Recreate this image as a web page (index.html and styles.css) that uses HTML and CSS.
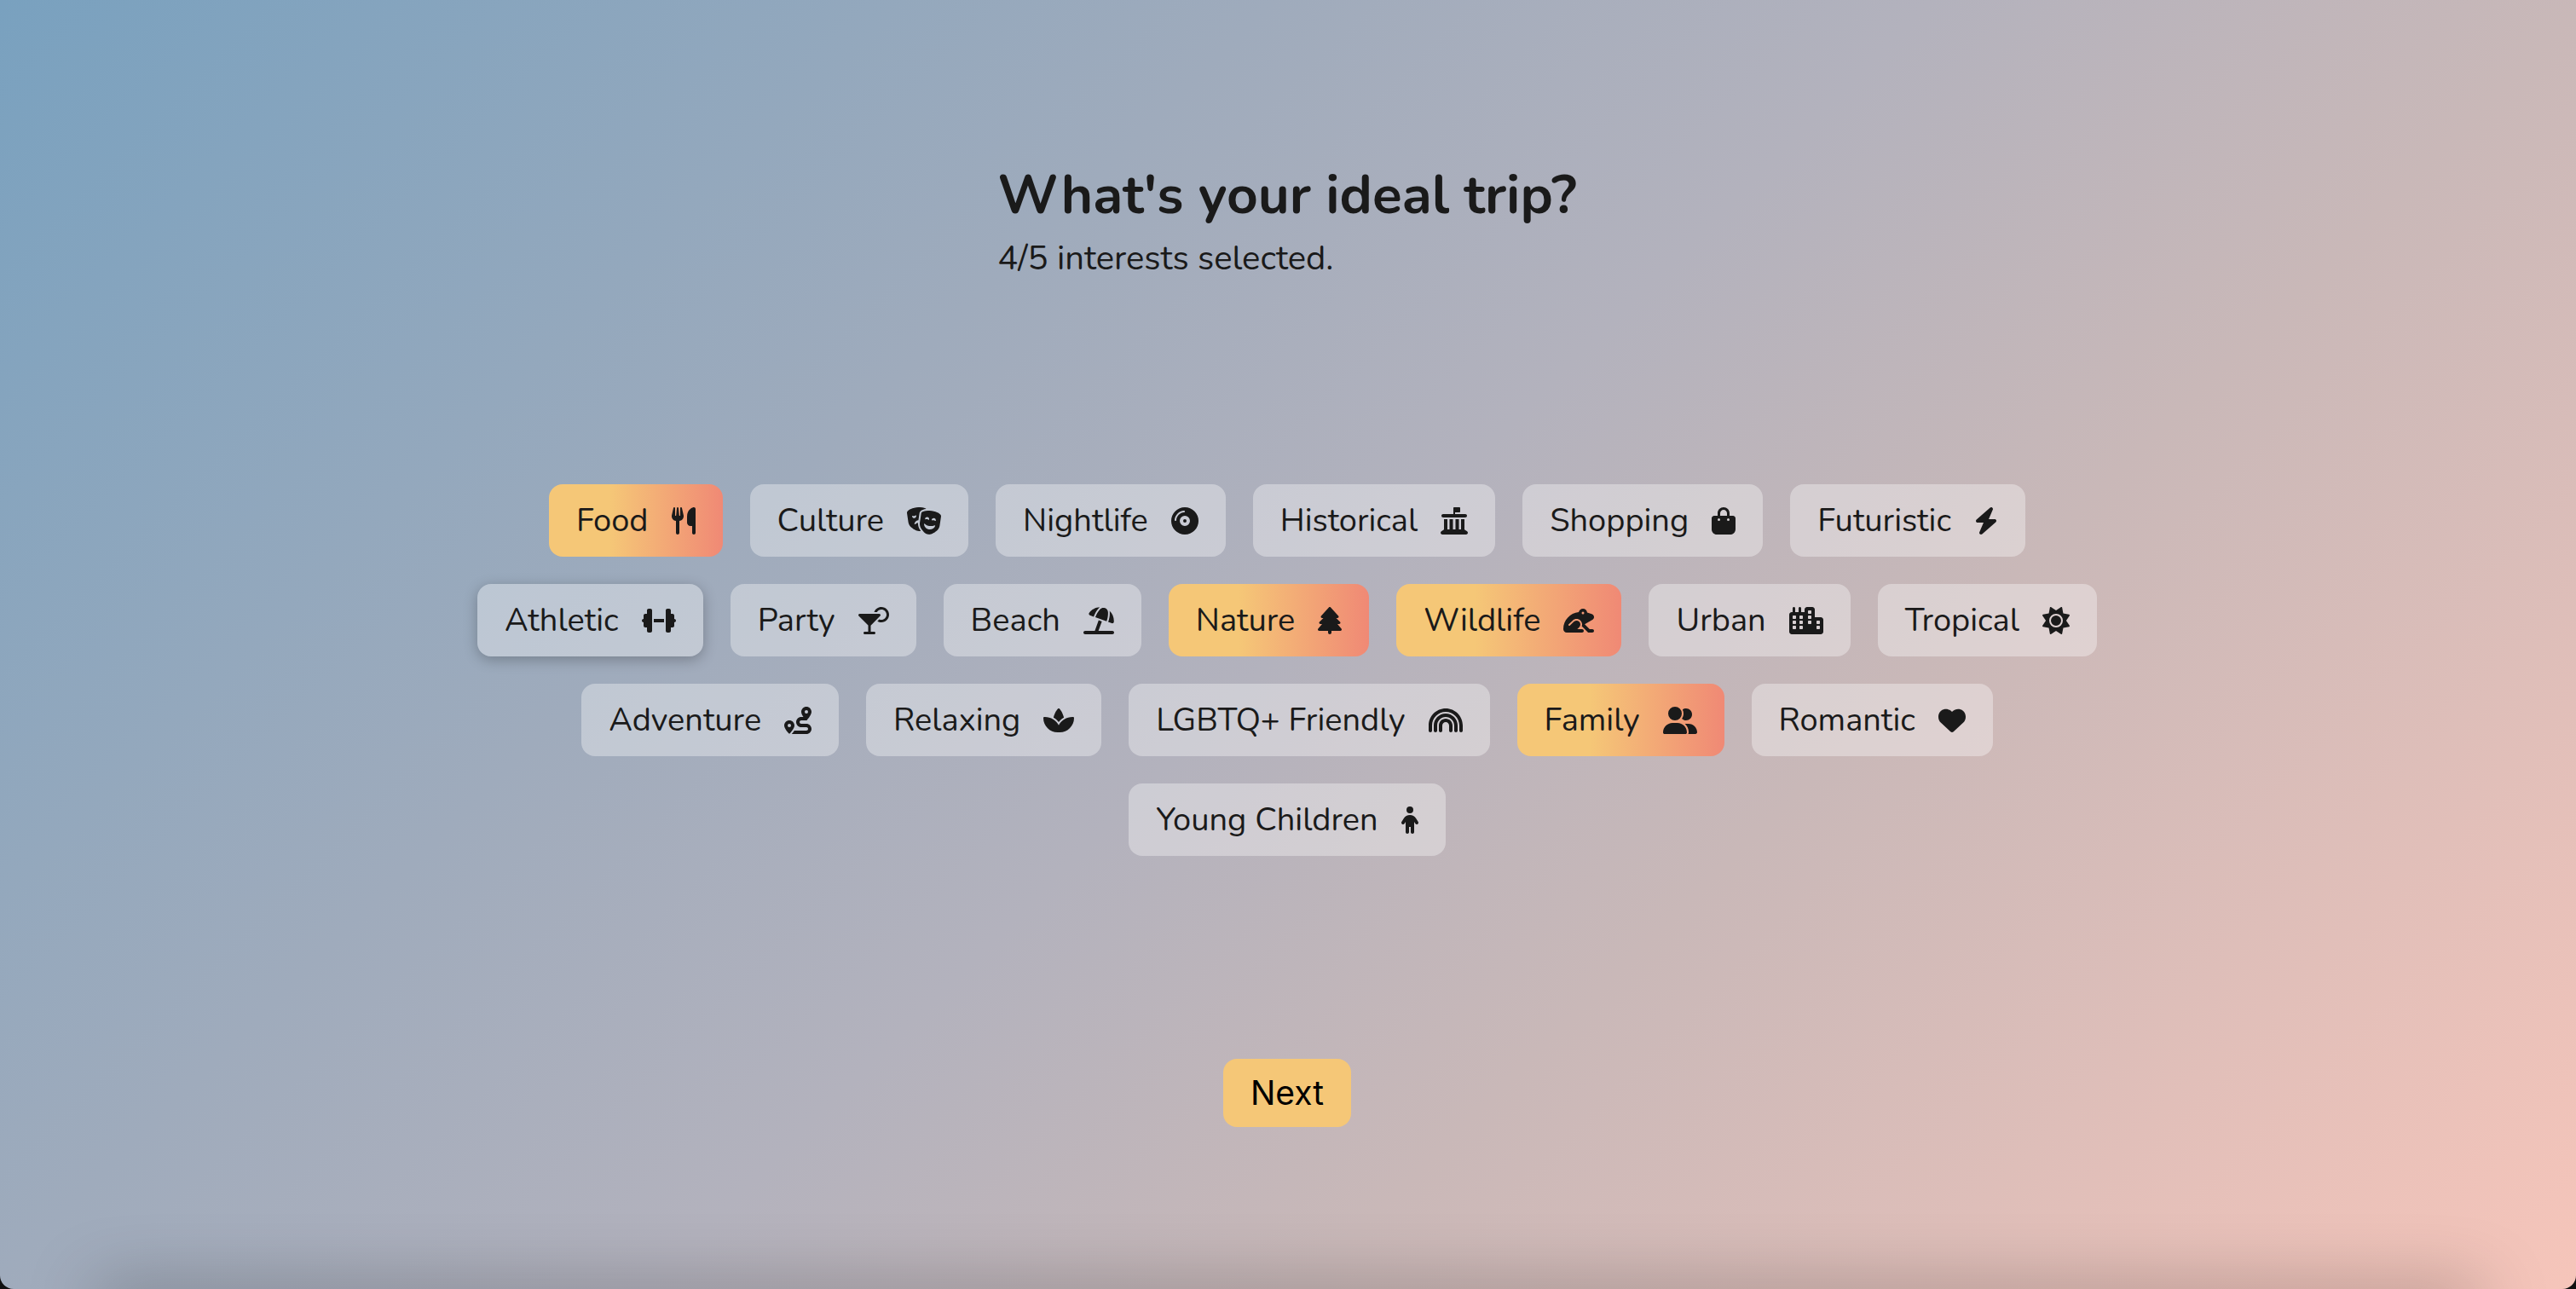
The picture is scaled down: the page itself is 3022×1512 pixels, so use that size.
FILE: index.html
```html
<!DOCTYPE html>
<html lang="en">
<head>
    <meta charset="UTF-8">
    <meta name="viewport" content="width=device-width, initial-scale=1.0">
    <title>What's your ideal trip?</title>
    <link rel="stylesheet" href="styles.css">
</head>
<body>
    <main class="page">
        <header class="intro">
            <h1>What's your ideal trip?</h1>
            <p id="counter">4/5 interests selected.</p>
        </header>

        <div class="interests">
            <button type="button" class="interest selected" aria-pressed="true">
                <span>Food</span>
                <svg viewBox="0 0 448 512" aria-hidden="true"><path d="M416 0C400 0 288 32 288 176V288c0 35.3 28.7 64 64 64h32V480c0 17.7 14.3 32 32 32s32-14.3 32-32V352 240 32c0-17.7-14.3-32-32-32zM64 16C64 7.8 57.9 1 49.7 .1S34.2 4.6 32.4 12.5L2.1 148.8C.7 155.1 0 161.5 0 167.9c0 45.9 35.1 83.6 80 87.7V480c0 17.7 14.3 32 32 32s32-14.3 32-32V255.6c44.9-4.1 80-41.8 80-87.7c0-6.4-.7-12.8-2.1-19.1L191.6 12.5c-1.8-8-9.3-13.3-17.4-12.4S160 7.8 160 16V150.2c0 5.4-4.4 9.8-9.8 9.8c-5.1 0-9.3-3.9-9.8-9L127.9 14.6C127.2 6.3 120.3 0 112 0s-15.2 6.3-15.9 14.6L83.7 151c-.5 5.1-4.7 9-9.8 9c-5.4 0-9.8-4.4-9.8-9.8V16z"/></svg>
            </button>
            <button type="button" class="interest" aria-pressed="false">
                <span>Culture</span>
                <svg viewBox="0 0 640 512" aria-hidden="true"><path d="M74.600 373.200c41.700 36.100 108 82.500 166.100 73.700c6.100-.9 12.100-2.500 18-4.500c-9.200-12.300-17.300-24.400-24.200-35.400c-21.900-35-28.800-75.200-25.900-113.600c-20.600 4.100-39.200 13-54.700 25.400c-6.500 5.200-16.300 1.300-14.800-7c6.400-33.500 33-60.900 68.200-66.300c2.600-.4 5.300-.7 7.900-.8l19.400-131.300c2-13.800 8-32.700 25-45.900C278.200 53.200 310.500 37 363.200 32.200c-.8-.7-1.600-1.400-2.400-2.100C340.600 14.500 288.400-11.500 175.700 5.600S20.500 63 5.700 83.900C0 91.900-.8 102 .6 111.800L24.800 276.100c5.500 37.300 21.500 72.600 49.800 97.200zm87.700-219.600c4.400-3.100 10.800-2 11.800 3.300c.1 .5 .2 1.100 .3 1.600c3.200 21.800-11.600 42-33.100 45.300s-41.500-11.800-44.700-33.500c-.1-.5-.1-1.100-.2-1.600c-.6-5.400 5.200-8.400 10.300-6.700c9 3 18.800 3.900 28.700 2.400s19.100-5.300 26.800-10.800zM261.600 390c29.400 46.900 79.500 110.900 137.600 119.700s124.500-37.500 166.100-73.700c28.300-24.500 44.300-59.800 49.800-97.200l24.200-164.300c1.400-9.800 .6-19.900-5.100-27.900c-14.800-20.900-57.300-61.200-170-78.300S299.400 77.200 279.200 92.800c-7.800 6-11.500 15.400-12.900 25.200L242.100 282.300c-5.500 37.300-.4 75.800 19.600 107.700zM404.500 235.300c-7.700-5.500-16.800-9.300-26.800-10.800s-19.800-.6-28.700 2.400c-5.100 1.700-10.900-1.300-10.300-6.700c.1-.5 .1-1.100 .2-1.600c3.200-21.800 23.200-36.800 44.700-33.500s36.300 23.500 33.100 45.300c-.1 .5-.2 1.100-.3 1.600c-1 5.300-7.400 6.400-11.800 3.300zm136.200 15.500c-1 5.300-7.400 6.400-11.800 3.300c-7.700-5.500-16.800-9.300-26.800-10.800s-19.800-.6-28.700 2.400c-5.100 1.700-10.900-1.300-10.300-6.700c.1-.5 .1-1.100 .2-1.600c3.200-21.800 23.200-36.800 44.700-33.500s36.300 23.500 33.100 45.300c-.1 .5-.2 1.100-.3 1.600zM530 350.200c-19.600 44.700-66.800 72.500-116.800 64.900s-87.100-48.200-93-96.700c-1-8.300 8.900-12.100 15.200-6.700c23.900 20.800 53.600 35.300 87 40.300s66.100 .1 94.900-12.800c7.600-3.400 16 3.200 12.600 10.900z"/></svg>
            </button>
            <button type="button" class="interest" aria-pressed="false">
                <span>Nightlife</span>
                <svg viewBox="0 0 512 512" aria-hidden="true"><path fill-rule="evenodd" d="M0 256a256 256 0 1 1 512 0A256 256 0 1 1 0 256zm256 32a32 32 0 1 1 0-64 32 32 0 1 1 0 64zm-96-32a96 96 0 1 0 192 0 96 96 0 1 0-192 0zM96 240c0-35 17.500-71.100 45.200-98.800S205 96 240 96c8.800 0 16-7.200 16-16s-7.200-16-16-16c-45.400 0-89.200 22.300-121.500 54.500S64 194.600 64 240c0 8.800 7.200 16 16 16s16-7.200 16-16z"/></svg>
            </button>
            <button type="button" class="interest" aria-pressed="false">
                <span>Historical</span>
                <svg viewBox="0 0 512 512" aria-hidden="true"><path d="M272 0h80c8.800 0 16 7.200 16 16V80c0 8.800-7.200 16-16 16H272v32H464c17.700 0 32 14.300 32 32s-14.300 32-32 32H48c-17.700 0-32-14.300-32-32s14.300-32 32-32H240V16c0-8.800 7.200-16 16-16h16zM64 224h64V416h40V224h64V416h48V224h64V416h40V224h64V420.300c.6 .3 1.200 .7 1.700 1.100l48 32c11.700 7.800 17 22.400 12.900 35.900S494.100 512 480 512H32c-14.100 0-26.500-9.200-30.600-22.700s1.100-28.100 12.900-35.900l48-32c.6-.4 1.200-.7 1.800-1.100V224z"/></svg>
            </button>
            <button type="button" class="interest" aria-pressed="false">
                <span>Shopping</span>
                <svg viewBox="0 0 448 512" aria-hidden="true"><path d="M160 112c0-35.300 28.700-64 64-64s64 28.700 64 64v48H160V112zm-48 48H48c-26.500 0-48 21.500-48 48V416c0 53 43 96 96 96H352c53 0 96-43 96-96V208c0-26.500-21.500-48-48-48H336V112C336 50.100 285.900 0 224 0S112 50.100 112 112v48zm24 48a24 24 0 1 1 0 48 24 24 0 1 1 0-48zm152 24a24 24 0 1 1 48 0 24 24 0 1 1-48 0z" fill-rule="evenodd"/></svg>
            </button>
            <button type="button" class="interest" aria-pressed="false">
                <span>Futuristic</span>
                <svg viewBox="0 0 448 512" aria-hidden="true"><path d="M349.400 44.600c5.900-13.700 1.500-29.700-10.600-38.500s-28.600-8-39.900 1.800l-256 224c-10 8.800-13.600 22.900-8.900 35.300S50.700 288 64 288H175.500L98.600 467.400c-5.900 13.700-1.500 29.700 10.600 38.500s28.600 8 39.900-1.800l256-224c10-8.800 13.600-22.900 8.900-35.300s-16.600-20.700-30-20.700H272.500L349.400 44.600z"/></svg>
            </button>
            <button type="button" class="interest raised" aria-pressed="false">
                <span>Athletic</span>
                <svg viewBox="0 0 640 512" aria-hidden="true"><path d="M96 64c0-17.700 14.300-32 32-32h32c17.700 0 32 14.300 32 32V224v64V448c0 17.700-14.300 32-32 32H128c-17.700 0-32-14.300-32-32V384H64c-17.700 0-32-14.300-32-32V288c-17.700 0-32-14.300-32-32s14.300-32 32-32V160c0-17.700 14.300-32 32-32H96V64zm448 0v64h32c17.700 0 32 14.300 32 32v64c17.700 0 32 14.300 32 32s-14.300 32-32 32v64c0 17.700-14.300 32-32 32H544v64c0 17.700-14.300 32-32 32H480c-17.700 0-32-14.300-32-32V288 224 64c0-17.700 14.300-32 32-32h32c17.700 0 32 14.300 32 32zM416 224v64H224V224H416z"/></svg>
            </button>
            <button type="button" class="interest" aria-pressed="false">
                <span>Party</span>
                <svg viewBox="0 0 576 512" aria-hidden="true"><path d="M432 240c53 0 96-43 96-96s-43-96-96-96c-35.500 0-66.600 19.300-83.200 48H296.200C316 40.100 369.300 0 432 0c79.500 0 144 64.500 144 144s-64.500 144-144 144c-27.700 0-53.500-7.800-75.500-21.300l35.400-35.400c12.200 5.600 25.800 8.700 40.100 8.700zM1.800 142.800C5.500 133.800 14.300 128 24 128H392c9.700 0 18.500 5.800 22.200 14.800s1.700 19.300-5.200 26.200l-177 177V464h64c13.300 0 24 10.700 24 24s-10.700 24-24 24H208 120c-13.300 0-24-10.700-24-24s10.700-24 24-24h64V345.900L7 169c-6.900-6.900-8.900-17.200-5.200-26.200z"/></svg>
            </button>
            <button type="button" class="interest" aria-pressed="false">
                <span>Beach</span>
                <svg viewBox="0 0 576 512" aria-hidden="true"><path d="M346.300 271.800l-60.100-21.900L214 448H32c-17.700 0-32 14.300-32 32s14.300 32 32 32H544c17.700 0 32-14.300 32-32s-14.300-32-32-32H282.100l64.100-176.200zm121.100-.2l-3.300 9.100 67.700 24.600c18.100 6.600 38-4.200 39.600-23.400c6.500-78.500-23.900-155.500-80.800-208.500c2 8 3.200 16.300 3.400 24.800l.2 6c1.800 57-7.300 113.800-26.800 167.400zM462 99.100c-1.100-34.400-22.500-64.800-54.400-77.400c-.9-.4-1.900-.7-2.800-1.100c-33-11.700-69.800-2.400-93.100 23.800l-4 4.500C272.400 88.300 245 134.200 226.800 184l-3.300 9.100L434 269.700l3.300-9.100c18.100-49.800 26.600-102.500 24.900-155.500l-.2-6zM107.200 112.900c-11.100 15.700-2.800 36.800 15.300 43.400l71 25.800 3.300-9.100c19.500-53.600 49.100-103 87.100-145.500l4-4.500c6.200-6.900 13.100-13 20.500-18.200c-79.600 2.500-154.700 42.200-201.200 108z"/></svg>
            </button>
            <button type="button" class="interest selected" aria-pressed="true">
                <span>Nature</span>
                <svg viewBox="0 0 448 512" aria-hidden="true"><path d="M210.600 5.900L62 169.400c-3.900 4.200-6 9.800-6 15.500C56 197.700 66.300 208 79.100 208H104L30.600 281.400c-4.200 4.200-6.600 10-6.600 16C24 309.900 34.100 320 46.600 320H80L5.400 409.500C1.900 413.700 0 419 0 424.500c0 13 10.500 23.500 23.500 23.500H192v32c0 17.700 14.300 32 32 32s32-14.300 32-32V448H424.500c13 0 23.500-10.500 23.500-23.500c0-5.500-1.900-10.800-5.400-15L368 320h33.400c12.500 0 22.600-10.100 22.600-22.600c0-6-2.400-11.800-6.600-16L344 208h24.900c12.700 0 23.100-10.300 23.100-23.100c0-5.700-2.100-11.300-6-15.500L237.400 5.900C234 2.100 229.100 0 224 0s-10 2.100-13.400 5.900z"/></svg>
            </button>
            <button type="button" class="interest selected" aria-pressed="true">
                <span>Wildlife</span>
                <svg viewBox="0 0 576 512" aria-hidden="true"><path d="M368 32c41.700 0 75.900 31.800 79.700 72.500l85.600 26.300c25.400 7.800 42.800 31.300 42.800 57.900c0 21.800-11.700 41.900-30.700 52.700L400.800 323.500 493.300 416H544c17.700 0 32 14.300 32 32s-14.300 32-32 32H480c-8.500 0-16.600-3.400-22.600-9.400L346.900 360.200c11.700-36 3.200-77.100-25.400-105.700c-40.600-40.600-106.300-40.600-146.900-.1L101 324.400c-6.400 6.100-6.700 16.200-.6 22.600s16.200 6.600 22.600 .6l73.800-70.200 .1-.1 .1-.1c3.500-3.500 7.300-6.600 11.300-9.200c27.900-18.500 65.900-15.400 90.500 9.200c24.700 24.700 27.700 62.900 9 90.900c-2.600 3.800-5.600 7.500-9 10.900L261.800 416H352c17.700 0 32 14.300 32 32s-14.300 32-32 32H64c-35.300 0-64-28.700-64-64C0 249.600 127 112.900 289.300 97.500C296.200 60.200 328.800 32 368 32zm0 104a24 24 0 1 0 0-48 24 24 0 1 0 0 48z"/></svg>
            </button>
            <button type="button" class="interest" aria-pressed="false">
                <span>Urban</span>
                <svg viewBox="0 0 640 512" aria-hidden="true"><path fill-rule="evenodd" d="M480 48c0-26.500-21.500-48-48-48H336c-26.500 0-48 21.500-48 48V96H224V24c0-13.300-10.700-24-24-24s-24 10.700-24 24V96H112V24c0-13.300-10.700-24-24-24S64 10.700 64 24V96H48C21.500 96 0 117.500 0 144v96V464c0 26.500 21.500 48 48 48H304h32 96H592c26.500 0 48-21.500 48-48V240c0-26.500-21.500-48-48-48H480V48zm96 320v32c0 8.800-7.200 16-16 16H528c-8.800 0-16-7.200-16-16V368c0-8.800 7.200-16 16-16h32c8.800 0 16 7.200 16 16zM240 416H208c-8.800 0-16-7.200-16-16V368c0-8.800 7.200-16 16-16h32c8.800 0 16 7.200 16 16v32c0 8.800-7.200 16-16 16zM128 400c0 8.800-7.200 16-16 16H80c-8.800 0-16-7.200-16-16V368c0-8.800 7.200-16 16-16h32c8.800 0 16 7.200 16 16v32zM560 256c8.800 0 16 7.200 16 16v32c0 8.800-7.200 16-16 16H528c-8.800 0-16-7.200-16-16V272c0-8.800 7.200-16 16-16h32zM256 176v32c0 8.800-7.200 16-16 16H208c-8.800 0-16-7.200-16-16V176c0-8.800 7.200-16 16-16h32c8.800 0 16 7.200 16 16zM112 160c8.800 0 16 7.200 16 16v32c0 8.800-7.200 16-16 16H80c-8.800 0-16-7.200-16-16V176c0-8.800 7.200-16 16-16h32zM256 304c0 8.800-7.200 16-16 16H208c-8.800 0-16-7.200-16-16V272c0-8.800 7.200-16 16-16h32c8.800 0 16 7.200 16 16v32zM112 320H80c-8.800 0-16-7.200-16-16V272c0-8.800 7.200-16 16-16h32c8.800 0 16 7.200 16 16v32c0 8.800-7.200 16-16 16zm304-48v32c0 8.800-7.200 16-16 16H368c-8.800 0-16-7.200-16-16V272c0-8.800 7.200-16 16-16h32c8.800 0 16 7.200 16 16zM400 64c8.800 0 16 7.200 16 16v32c0 8.800-7.200 16-16 16H368c-8.800 0-16-7.200-16-16V80c0-8.800 7.200-16 16-16h32zm16 112v32c0 8.800-7.200 16-16 16H368c-8.800 0-16-7.200-16-16V176c0-8.800 7.200-16 16-16h32c8.800 0 16 7.200 16 16z"/></svg>
            </button>
            <button type="button" class="interest" aria-pressed="false">
                <span>Tropical</span>
                <svg viewBox="0 0 512 512" aria-hidden="true"><path d="M361.500 1.200c5 2.100 8.600 6.600 9.600 11.900L391 121l107.900 19.800c5.300 1 9.800 4.600 11.900 9.600s1.500 10.700-1.600 15.200L446.900 256l62.300 90.300c3.100 4.500 3.700 10.200 1.600 15.200s-6.600 8.600-11.900 9.600L391 391 371.100 498.900c-1 5.300-4.600 9.800-9.600 11.900s-10.700 1.500-15.200-1.600L256 446.900l-90.300 62.300c-4.500 3.100-10.200 3.700-15.200 1.600s-8.600-6.600-9.600-11.900L121 391 13.100 371.100c-5.300-1-9.800-4.600-11.900-9.600s-1.500-10.700 1.600-15.200L65.100 256 2.800 165.700c-3.100-4.500-3.700-10.200-1.600-15.200s6.600-8.600 11.900-9.600L121 121 140.900 13.100c1-5.300 4.600-9.800 9.600-11.900s10.700-1.500 15.200 1.600L256 65.100 346.300 2.800c4.500-3.100 10.200-3.700 15.200-1.600zM160 256a96 96 0 1 1 192 0 96 96 0 1 1-192 0zm224 0a128 128 0 1 0-256 0 128 128 0 1 0 256 0z"/></svg>
            </button>
            <button type="button" class="interest" aria-pressed="false">
                <span>Adventure</span>
                <svg viewBox="0 0 512 512" aria-hidden="true"><path fill-rule="evenodd" d="M512 96c0 50.200-59.100 125.100-84.600 155c-3.800 4.400-9.400 6.100-14.500 5H320c-17.700 0-32 14.300-32 32s14.300 32 32 32h96c53 0 96 43 96 96s-43 96-96 96H139.600c8.700-9.900 19.300-22.600 30-36.800c6.300-8.400 12.800-17.600 19-27.200H416c17.700 0 32-14.300 32-32s-14.300-32-32-32H320c-53 0-96-43-96-96s43-96 96-96h39.800c-21-31.500-39.800-67.700-39.800-96c0-53 43-96 96-96s96 43 96 96zM117.100 489.100c-3.800 4.300-7.200 8.100-10.100 11.300l-1.800 2-.2-.2c-6 4.600-14.600 4-20-1.800C59.800 473 0 402.500 0 352c0-53 43-96 96-96s96 43 96 96c0 30-21.100 67-43.500 97.900c-10.700 14.700-21.700 28-30.800 38.500l-.6 .7zM128 352a32 32 0 1 0-64 0 32 32 0 1 0 64 0zM416 128a32 32 0 1 0 0-64 32 32 0 1 0 0 64z"/></svg>
            </button>
            <button type="button" class="interest" aria-pressed="false">
                <span>Relaxing</span>
                <svg viewBox="0 0 576 512" aria-hidden="true"><path d="M183.100 235.300c33.700 20.700 62.900 48.100 85.800 80.500c7 9.900 13.400 20.300 19.100 31c5.700-10.800 12.100-21.100 19.100-31c22.900-32.400 52.100-59.800 85.800-80.500C437.600 207.800 490.100 192 546 192h9.900c11.100 0 20.100 9 20.100 20.100C576 360.100 456.100 480 308.100 480H288 267.900C119.900 480 0 360.100 0 212.100C0 201 9 192 20.100 192H30c55.900 0 108.400 15.800 153.100 43.300zM301.500 37.600c15.700 16.900 61.100 71.800 84.400 164.600c-38 21.600-71.400 50.800-97.900 85.600c-26.500-34.800-59.900-63.900-97.900-85.600c23.200-92.800 68.600-147.700 84.400-164.600C278 33.900 282.900 32 288 32s10 1.900 13.500 5.600z"/></svg>
            </button>
            <button type="button" class="interest" aria-pressed="false">
                <span>LGBTQ+ Friendly</span>
                <svg viewBox="0 0 640 512" aria-hidden="true"><path d="M320 96C178.600 96 64 210.600 64 352v96c0 17.700-14.300 32-32 32s-32-14.300-32-32V352C0 175.300 143.300 32 320 32s320 143.300 320 320v96c0 17.700-14.300 32-32 32s-32-14.300-32-32V352C576 210.600 461.400 96 320 96zm0 192c-35.300 0-64 28.700-64 64v96c0 17.700-14.300 32-32 32s-32-14.300-32-32V352c0-70.700 57.300-128 128-128s128 57.300 128 128v96c0 17.700-14.300 32-32 32s-32-14.300-32-32V352c0-35.300-28.700-64-64-64zM160 352v96c0 17.700-14.300 32-32 32s-32-14.300-32-32V352c0-123.700 100.300-224 224-224s224 100.300 224 224v96c0 17.700-14.300 32-32 32s-32-14.300-32-32V352c0-88.400-71.600-160-160-160s-160 71.600-160 160z"/></svg>
            </button>
            <button type="button" class="interest selected" aria-pressed="true">
                <span>Family</span>
                <svg viewBox="0 0 640 512" aria-hidden="true"><path d="M96 128a128 128 0 1 1 256 0A128 128 0 1 1 96 128zM0 482.300C0 383.800 79.800 304 178.300 304h91.400C368.200 304 448 383.800 448 482.300c0 16.400-13.300 29.700-29.700 29.700H29.700C13.300 512 0 498.700 0 482.300zM609.300 512H471.400c5.400-9.400 8.600-20.300 8.600-32v-8c0-60.700-27.100-115.200-69.800-151.800c2.400-.1 4.700-.2 7.100-.2h61.400C567.800 320 640 392.200 640 481.300c0 17-13.800 30.700-30.700 30.700zM432 256c-31 0-59-12.600-79.300-32.900C372.400 196.500 384 163.600 384 128c0-26.800-6.600-52.100-18.300-74.300C384.300 40.100 407.200 32 432 32c61.900 0 112 50.100 112 112s-50.100 112-112 112z"/></svg>
            </button>
            <button type="button" class="interest" aria-pressed="false">
                <span>Romantic</span>
                <svg viewBox="0 0 512 512" aria-hidden="true"><path d="M47.600 300.400L228.300 469.100c7.500 7 17.400 10.900 27.700 10.900s20.200-3.900 27.700-10.900L464.400 300.400c30.400-28.300 47.600-68 47.600-109.500v-5.800c0-69.900-50.500-129.500-119.400-141C347 36.500 300.600 51.400 268 84L256 96 244 84c-32.600-32.600-79-47.500-124.600-39.900C50.500 55.600 0 115.200 0 185.100v5.800c0 41.500 17.200 81.200 47.600 109.500z"/></svg>
            </button>
            <button type="button" class="interest" aria-pressed="false">
                <span>Young Children</span>
                <svg viewBox="0 0 320 512" aria-hidden="true"><path d="M96 64a64 64 0 1 1 128 0A64 64 0 1 1 96 64zm48 320v96c0 17.700-14.300 32-32 32s-32-14.300-32-32V287.800L59.100 321c-9.400 15-29.200 19.400-44.100 10S-4.500 301.900 4.900 287l39.900-63.300C69.700 184 113.200 160 160 160s90.300 24 115.200 63.600L315.100 287c9.400 15 4.900 34.700-10 44.100s-34.700 4.900-44.100-10L240 287.800V480c0 17.700-14.300 32-32 32s-32-14.300-32-32V384H144z"/></svg>
            </button>
        </div>

        <button type="button" class="next-btn">Next</button>
    </main>

    <script>
        const MAX_INTERESTS = 5;
        const counter = document.getElementById('counter');

        document.querySelectorAll('.interest').forEach(button => {
            button.addEventListener('click', () => {
                const count = document.querySelectorAll('.interest.selected').length;
                if (!button.classList.contains('selected') && count >= MAX_INTERESTS) {
                    return;
                }
                const on = button.classList.toggle('selected');
                button.setAttribute('aria-pressed', on);
                counter.textContent = `${count + (on ? 1 : -1)}/${MAX_INTERESTS} interests selected.`;
            });
        });
    </script>
</body>
</html>
```

FILE: styles.css
```css
* {
    box-sizing: border-box;
}
html {
    background-color: #111;
}
body {
    margin: 0;
    font-family: Nunito, Lato, sans-serif;
    color: #1a1a1a;
}
.page {
    position: relative;
    display: flex;
    flex-direction: column;
    align-items: center;
    gap: 238px;
    min-height: 100vh;
    padding: 182px 34px 64px 32px;
    background: linear-gradient(135deg, #79a1bf 0%, #9fabbc 33%, #b3b2bd 50%, #c9b8b8 67%, #f6c5ba 100%);
    border-radius: 0 0 16px 16px;
    overflow: hidden;
}
/* soft shade along the bottom edge */
.page::after {
    content: "";
    position: absolute;
    left: 120px;
    right: 120px;
    bottom: -28px;
    height: 20px;
    box-shadow: 0 0 80px 8px rgba(0, 0, 0, 0.35);
    pointer-events: none;
}
.intro h1 {
    margin: 0;
    font-size: 64px;
    font-weight: bold;
    line-height: 94px;
}
.intro p {
    margin: 0;
    font-size: 40px;
    line-height: 54px;
}
.interests {
    display: flex;
    flex-wrap: wrap;
    justify-content: center;
    gap: 32px;
    width: 65%;
}
.interest {
    display: flex;
    align-items: center;
    gap: 27px;
    padding: 16px 32px;
    border: none;
    border-radius: 16px;
    background-color: rgba(255, 255, 255, 0.35);
    color: inherit;
    font-family: inherit;
    font-size: 38px;
    line-height: 53px;
    cursor: pointer;
}
.interest svg {
    flex: none;
    height: 32px;
    fill: currentColor;
}
.interest.selected {
    background: linear-gradient(to right, #f5c777 0%, #f5c777 35%, #f08975 100%);
}
.interest.raised,
.interest:hover {
    box-shadow: 0 4px 16px rgba(0, 0, 0, 0.25);
}
.next-btn {
    padding: 16px 32px;
    border: none;
    border-radius: 16px;
    background-color: #f5c777;
    color: #000;
    font-family: Inter, sans-serif;
    font-size: 39px;
    font-weight: 400;
    line-height: 48px;
    cursor: pointer;
}
```
